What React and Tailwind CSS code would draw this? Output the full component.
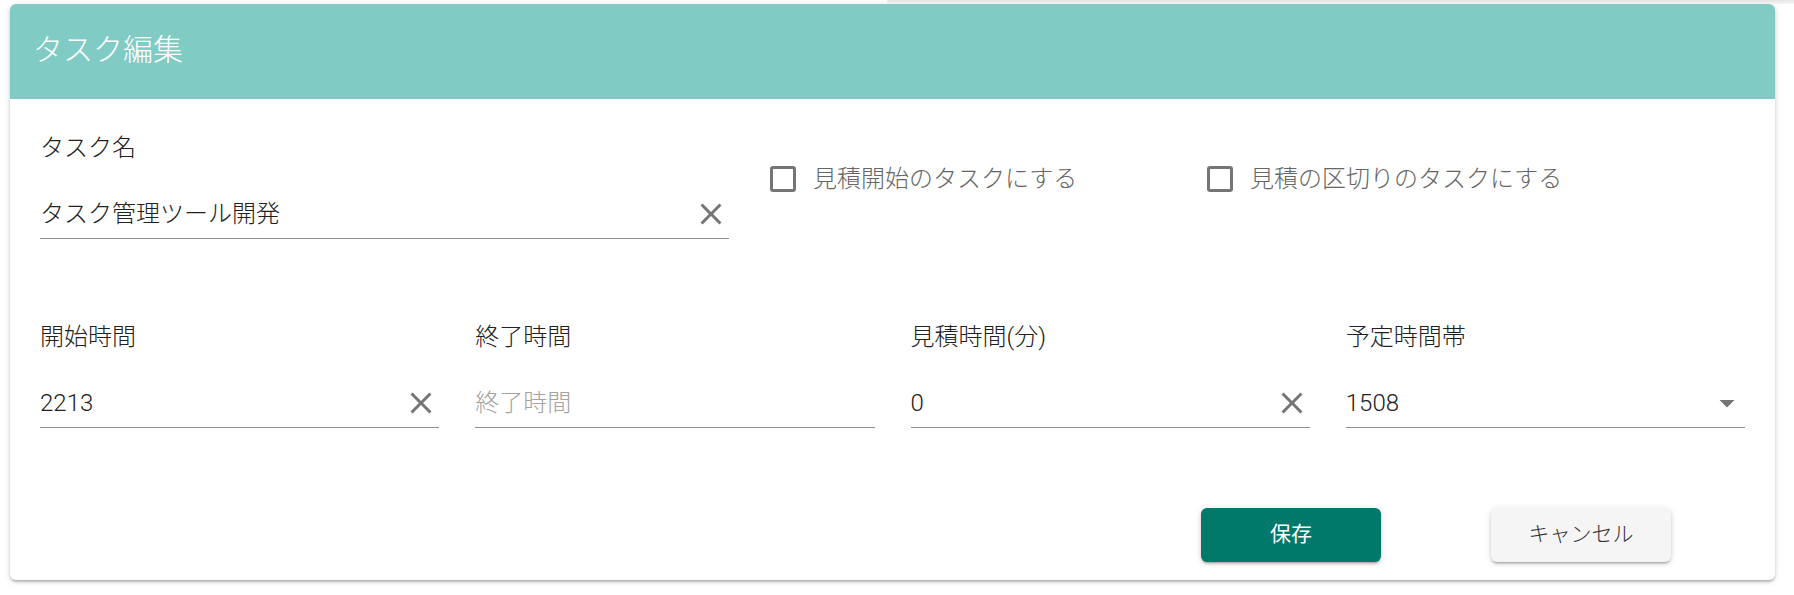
import React from "react";

const CLOSE =
  "M19,6.41L17.59,5L12,10.59L6.41,5L5,6.41L10.59,12L5,17.59L6.41,19L12,13.41L17.59,19L19,17.59L13.41,12L19,6.41Z";
const MENU_DOWN = "M7,10L12,15L17,10H7Z";

function Icon({ d }) {
  return (
    <svg viewBox="0 0 24 24" className="w-[36px] h-[36px] shrink-0" fill="#757575">
      <path d={d} />
    </svg>
  );
}

function Field({ label, value, placeholder, icon }) {
  return (
    <div className="flex flex-col">
      <div className="text-[24px] leading-[36px] text-[#212121] font-light">{label}</div>
      <div className="mt-[30px] flex items-center justify-between border-b-[1.5px] border-[#8f8f8f] pb-[6px]">
        {value !== undefined ? (
          <span className="text-[24px] leading-[36px] text-[#212121] font-light">{value}</span>
        ) : (
          <span className="text-[24px] leading-[36px] text-[#a3a3a3] font-light">{placeholder}</span>
        )}
        {icon ? <Icon d={icon} /> : <span className="h-[36px]" />}
      </div>
    </div>
  );
}

function Check({ label, className }) {
  return (
    <div className={"flex items-center h-[36px] " + (className || "")}>
      <div className="w-[26px] h-[26px] border-[3px] border-[#757575] rounded-[3px] shrink-0" />
      <span className="ml-[17px] text-[24px] leading-[36px] text-[#666666] whitespace-nowrap font-light">
        {label}
      </span>
    </div>
  );
}

export default function App() {
  return (
    <div className="w-[1794px] h-[595px] bg-white font-[Roboto,'Noto_Sans_CJK_JP',sans-serif] overflow-hidden">
      <div className="h-[4px] flex">
        <div className="ml-[887px] flex-1 bg-gradient-to-b from-[#e6e6e6] to-[#f4f4f4]" />
      </div>
      <div className="ml-[10px] w-[1765px] rounded-[6px] bg-white overflow-hidden shadow-[0_3px_3px_-2px_rgba(0,0,0,0.2),0_2px_3px_0_rgba(0,0,0,0.14),0_1px_7px_0_rgba(0,0,0,0.12)]">
        <div className="h-[95px] bg-[#80CBC4] flex items-center pl-[23px] pb-[4px]">
          <span className="text-white text-[30px] leading-[40px] font-light">タスク編集</span>
        </div>
        <div className="px-[30px] pt-[31px] pb-[18px]">
          <div className="flex items-start">
            <div className="w-[689px]">
              <Field label="タスク名" value="タスク管理ツール開発" icon={CLOSE} />
            </div>
            <Check label="見積開始のタスクにする" className="ml-[41px] w-[437px] mt-[31px]" />
            <Check label="見積の区切りのタスクにする" className="mt-[31px]" />
          </div>
          <div className="mt-[80px] grid grid-cols-4 gap-x-[36px]">
            <Field label="開始時間" value="2213" icon={CLOSE} />
            <Field label="終了時間" placeholder="終了時間" />
            <Field label="見積時間(分)" value="0" icon={CLOSE} />
            <Field label="予定時間帯" value="1508" icon={MENU_DOWN} />
          </div>
          <div className="mt-[80px] flex justify-end pr-[74px] gap-[110px]">
            <button className="w-[180px] h-[54px] rounded-[6px] bg-[#00796B] text-white text-[21px] shadow-[0_3px_2px_-2px_rgba(0,0,0,0.2),0_2px_3px_0_rgba(0,0,0,0.14),0_1px_7px_0_rgba(0,0,0,0.12)]">
              保存
            </button>
            <button className="w-[180px] h-[54px] rounded-[6px] bg-[#f5f5f5] text-[#333333] text-[21px] font-light shadow-[0_3px_2px_-2px_rgba(0,0,0,0.2),0_2px_3px_0_rgba(0,0,0,0.14),0_1px_7px_0_rgba(0,0,0,0.12)]">
              キャンセル
            </button>
          </div>
        </div>
      </div>
    </div>
  );
}
